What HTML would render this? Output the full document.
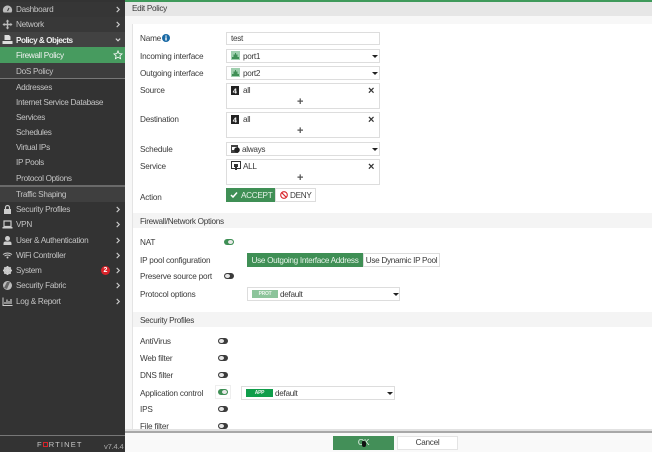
<!DOCTYPE html>
<html><head><meta charset="utf-8">
<style>
*{box-sizing:border-box}
html,body{margin:0;padding:0;width:652px;height:452px;overflow:hidden;background:#fff;font-family:"Liberation Sans",sans-serif;font-size:8.2px;letter-spacing:-.3px;color:#3a3a3a}
#all{position:absolute;left:0;top:0;width:652px;height:452px;filter:blur(.3px)}
.a{position:absolute;white-space:nowrap}
#side{position:absolute;left:0;top:0;width:125px;height:452px;background:#333;color:#c4c4c4}
.m{position:absolute;left:0;width:125px;height:15.4px;line-height:15.4px;white-space:nowrap}
.m span{position:absolute;left:16px}
.m svg.i{position:absolute;left:2px;top:2px;width:11px;height:11px}
.m svg.c{position:absolute;left:115px;top:4px;width:6px;height:7px}
.lb{position:absolute;left:140px;white-space:nowrap;letter-spacing:-.2px}
.box{position:absolute;left:226px;width:154px;background:#fff;border:1px solid #ddd}
.car{position:absolute;width:0;height:0;border-left:3px solid transparent;border-right:3px solid transparent;border-top:3px solid #222}
.tg{position:absolute;width:10px;height:6px;border-radius:3px;background:#3c3c3c}
.tg:after{content:"";position:absolute;left:1px;top:1px;width:5px;height:4px;border-radius:50%;background:#e8e8e8}
.tg.on{background:#3f8f55}
.tg.on:after{left:4px}
.sec{position:absolute;left:133px;width:519px;height:15px;background:#f4f4f4;line-height:17px;padding-left:7px}
.x{position:absolute;left:141px;top:1px;font-size:11px;line-height:13px;font-weight:bold;color:#333;letter-spacing:0}
.p{position:absolute;left:70px;top:12px;font-size:11px;line-height:13px;color:#555;font-weight:bold;letter-spacing:0}
</style></head><body><div id="all">
<div id="side">
<div class="m" style="top:2px;background:#363636;"><svg class="i" viewBox="0 0 11 11"><path d="M5.500 1.500a4.600 4.600 0 0 0-4.400 6l.5 1h7.800l.5-1a4.600 4.600 0 0 0-4.400-6z" fill="#bbb"/><path d="M5.500 7l1.500-3" stroke="#333" stroke-width="1"/></svg><span>Dashboard</span><svg class="c" viewBox="0 0 7 8"><path d="M2 1l3 3-3 3" fill="none" stroke="#ccc" stroke-width="1.300"/></svg></div>
<div class="m" style="top:17px;background:#383838"><svg class="i" viewBox="0 0 11 11"><path d="M5.500.5L7.300 2.500H6.200V4.800H8.500V3.700L10.500 5.500 8.500 7.300V6.200H6.200V8.500H7.300L5.500 10.500 3.700 8.500H4.800V6.200H2.500V7.300L.5 5.500 2.500 3.700V4.800H4.800V2.500H3.700z" fill="#bbb"/></svg><span>Network</span><svg class="c" viewBox="0 0 7 8"><path d="M2 1l3 3-3 3" fill="none" stroke="#ccc" stroke-width="1.300"/></svg></div>
<div class="m" style="top:32px;background:#424242;color:#eee;font-weight:bold;letter-spacing:-.5px"><svg class="i" viewBox="0 0 11 11"><path d="M2.500 1h4.500l1.500 1.500V6h-6zM.5 7h10v3h-10z" fill="#ddd"/></svg><span style="top:1px">Policy &amp; Objects</span><svg class="c" viewBox="0 0 7 8"><path d="M1 3l2.500 2.500L6 3" fill="none" stroke="#ddd" stroke-width="1.300"/></svg></div>
<div class="m" style="top:47px;height:16px;line-height:16px;background:#479b5f;color:#f2f2f2"><span style="top:1px">Firewall Policy</span><svg style="position:absolute;left:113px;top:3px;width:10px;height:10px" viewBox="0 0 11 11"><path d="M5.500 1l1.300 3 3.200.3-2.400 2.100.7 3.100-2.800-1.600-2.800 1.600.7-3.100L1 4.300l3.200-.3z" fill="none" stroke="#fff" stroke-width=".9"/></svg></div>
<div class="m" style="top:63px;height:16px;line-height:16px;background:#3d3d3d;border-bottom:1px solid #777"><span style="top:1px">DoS Policy</span></div>
<div class="m" style="top:80px"><span>Addresses</span></div>
<div class="m" style="top:94.500px"><span>Internet Service Database</span></div>
<div class="m" style="top:110px"><span>Services</span></div>
<div class="m" style="top:125px"><span>Schedules</span></div>
<div class="m" style="top:140px"><span>Virtual IPs</span></div>
<div class="m" style="top:155px"><span>IP Pools</span></div>
<div class="m" style="top:171px"><span>Protocol Options</span></div>
<div class="m" style="top:185px;height:17px;line-height:15px;background:#3f3f3f;border-top:2px solid #6a6a6a"><span>Traffic Shaping</span></div>
<div class="m" style="top:202px"><svg class="i" viewBox="0 0 11 11"><path d="M3.500 5V3.500a2 2 0 0 1 4 0V5" fill="none" stroke="#ccc" stroke-width="1.200"/><rect x="2" y="5" width="7" height="5" fill="#ccc"/></svg><span>Security Profiles</span><svg class="c" viewBox="0 0 7 8"><path d="M2 1l3 3-3 3" fill="none" stroke="#ccc" stroke-width="1.300"/></svg></div>
<div class="m" style="top:217px"><svg class="i" viewBox="0 0 11 11"><rect x="2" y="2" width="7" height="5.500" fill="none" stroke="#ccc" stroke-width="1.200"/><rect x=".5" y="8" width="10" height="1.500" fill="#ccc"/></svg><span>VPN</span><svg class="c" viewBox="0 0 7 8"><path d="M2 1l3 3-3 3" fill="none" stroke="#ccc" stroke-width="1.300"/></svg></div>
<div class="m" style="top:233px"><svg class="i" viewBox="0 0 11 11"><circle cx="5.500" cy="3.500" r="2.500" fill="#ccc"/><path d="M1.500 10V8.500q0-2 2-2h4q2 0 2 2V10z" fill="#ccc"/></svg><span>User &amp; Authentication</span><svg class="c" viewBox="0 0 7 8"><path d="M2 1l3 3-3 3" fill="none" stroke="#ccc" stroke-width="1.300"/></svg></div>
<div class="m" style="top:247.500px"><svg class="i" viewBox="0 0 11 11"><path d="M1 4.500q4.500-3 9 0M2.500 6q3-2 6 0" fill="none" stroke="#ccc" stroke-width="1"/><circle cx="5.500" cy="7.500" r="1" fill="#ccc"/></svg><span>WiFi Controller</span><svg class="c" viewBox="0 0 7 8"><path d="M2 1l3 3-3 3" fill="none" stroke="#ccc" stroke-width="1.300"/></svg></div>
<div class="m" style="top:263px"><svg class="i" viewBox="0 0 11 11"><circle cx="5.500" cy="5.500" r="3" fill="none" stroke="#ccc" stroke-width="2"/><path d="M5.500 1v9M1 5.500h9M2.300 2.300l6.400 6.400M8.700 2.300l-6.400 6.400" stroke="#ccc" stroke-width="1.300"/></svg><span>System</span><svg class="c" viewBox="0 0 7 8"><path d="M2 1l3 3-3 3" fill="none" stroke="#ccc" stroke-width="1.300"/></svg></div>
<div class="a" style="left:101px;top:266px;width:9px;height:9px;border-radius:50%;background:#d8232a;color:#fff;font-size:7px;font-weight:bold;line-height:9px;text-align:center;letter-spacing:0">2</div>
<div class="m" style="top:278px"><svg class="i" viewBox="0 0 11 11"><circle cx="5.500" cy="5.500" r="4.500" fill="#bbb"/><path d="M2 8l3-6 3 0-3 7z" fill="#666"/></svg><span>Security Fabric</span><svg class="c" viewBox="0 0 7 8"><path d="M2 1l3 3-3 3" fill="none" stroke="#ccc" stroke-width="1.300"/></svg></div>
<div class="m" style="top:294px"><svg class="i" viewBox="0 0 11 11"><path d="M1 1.500v8h9.500" fill="none" stroke="#ccc" stroke-width="1"/><path d="M3 8V6M5 8V3.500M7 8V5M9 8V3" stroke="#ccc" stroke-width="1.200"/></svg><span>Log &amp; Report</span><svg class="c" viewBox="0 0 7 8"><path d="M2 1l3 3-3 3" fill="none" stroke="#ccc" stroke-width="1.300"/></svg></div>
<div class="a" style="left:0;top:435px;width:125px;height:1px;background:#777"></div>
<div class="a" style="left:37px;top:440px;font-size:7.500px;letter-spacing:1.150px;color:#c4c4c4;line-height:9px">F<span style="display:inline-block;width:5px;height:5px;border:1.500px solid #d8232a;margin:0 1px 0 0;vertical-align:0"></span>RTINET</div>
<div class="a" style="left:104px;top:442px;font-size:7.600px;letter-spacing:-.2px;color:#aaa;line-height:10px">v7.4.4</div>
</div>
<div class="a" style="left:125px;top:0;width:527px;height:2px;background:#3f9a5b"></div>
<div class="a" style="left:125px;top:2px;width:527px;height:14px;background:#e6e6e6;line-height:14px;padding-left:7px">Edit Policy</div>
<div class="a" style="left:125px;top:16px;width:527px;height:8px;background:#f7f7f7"></div>
<div class="a" style="left:125px;top:24px;width:8px;height:408px;background:#f7f7f7"></div>
<div class="a" style="left:132px;top:24px;width:1px;height:408px;background:#e4e4e4"></div>

<div class="lb" style="top:34px">Name</div>
<svg class="a" style="left:162px;top:34px;width:8px;height:8px" viewBox="0 0 8 8"><circle cx="4" cy="4" r="4" fill="#1a6aa5"/><rect x="3.300" y="3.300" width="1.400" height="3.200" fill="#fff"/><rect x="3.300" y="1.500" width="1.400" height="1.200" fill="#fff"/></svg>
<div class="box" style="top:32px;height:13px;line-height:11px;padding-left:4px">test</div>
<div class="lb" style="top:52px">Incoming interface</div>
<div class="box" style="top:49px;height:14px;line-height:14px;padding-left:16px">port1<i class="car" style="left:145px;top:5px"></i><svg class="a" style="left:4px;top:1px;width:9px;height:9px" viewBox="0 0 9 9"><rect width="9" height="9" fill="#9fcfae"/><path d="M1 6h7v2H1zM2.500 3.500h4V6h-4zM4 2h1v2H4z" fill="#3f8f55"/></svg></div>
<div class="lb" style="top:69px">Outgoing interface</div>
<div class="box" style="top:66px;height:14px;line-height:14px;padding-left:16px">port2<i class="car" style="left:145px;top:5px"></i><svg class="a" style="left:4px;top:1px;width:9px;height:9px" viewBox="0 0 9 9"><rect width="9" height="9" fill="#9fcfae"/><path d="M1 6h7v2H1zM2.500 3.500h4V6h-4zM4 2h1v2H4z" fill="#3f8f55"/></svg></div>
<div class="lb" style="top:86px">Source</div>
<div class="box" style="top:83px;height:26px"><svg class="a" style="left:4px;top:2px;width:9px;height:9px" viewBox="0 0 9 9"><rect width="8" height="9" fill="#222"/><text x="1.800" y="7.500" font-size="7.500" font-weight="bold" fill="#fff" font-family="Liberation Sans">4</text></svg><div class="a" style="left:16px;top:1px;line-height:11px">all</div><div class="x">×</div><div class="p">+</div></div>
<div class="lb" style="top:115px">Destination</div>
<div class="box" style="top:112px;height:26px"><svg class="a" style="left:4px;top:2px;width:9px;height:9px" viewBox="0 0 9 9"><rect width="8" height="9" fill="#222"/><text x="1.800" y="7.500" font-size="7.500" font-weight="bold" fill="#fff" font-family="Liberation Sans">4</text></svg><div class="a" style="left:16px;top:1px;line-height:11px">all</div><div class="x">×</div><div class="p">+</div></div>
<div class="lb" style="top:145px">Schedule</div>
<div class="box" style="top:142px;height:14px;line-height:14px;padding-left:15px">always<i class="car" style="left:145px;top:5px"></i><svg class="a" style="left:4px;top:1px;width:9px;height:9px" viewBox="0 0 9 9"><rect x="0" y="1" width="7" height="8" fill="#444"/><rect x="1" y="3" width="5" height="3" fill="#fff"/><circle cx="6" cy="6" r="2.800" fill="#222"/></svg></div>
<div class="lb" style="top:162px">Service</div>
<div class="box" style="top:159px;height:26px"><svg class="a" style="left:4px;top:1px;width:10px;height:10px" viewBox="0 0 10 10"><rect x=".5" y=".5" width="9" height="7" fill="none" stroke="#333"/><path d="M3 3h4v3H6v3H4V6H3z" fill="#333"/></svg><div class="a" style="left:16px;top:1px;line-height:11px">ALL</div><div class="x">×</div><div class="p">+</div></div>
<div class="lb" style="top:193px">Action</div>
<div class="a" style="left:226px;top:188px;width:49px;height:14px;background:#3f8f55;color:#e8f3ea;line-height:16px;padding-left:15px"><svg class="a" style="left:4px;top:3px;width:8px;height:8px" viewBox="0 0 8 8"><path d="M1 4l2 2 4-4.500" fill="none" stroke="#fff" stroke-width="1.500"/></svg>ACCEPT</div>
<div class="a" style="left:275px;top:188px;width:41px;height:14px;background:#fff;border:1px solid #ddd;line-height:14px;padding-left:14px"><svg class="a" style="left:4px;top:2px;width:8px;height:8px" viewBox="0 0 8 8"><circle cx="4" cy="4" r="3.300" fill="none" stroke="#d8232a" stroke-width="1.100"/><path d="M1.700 1.700l4.600 4.600" stroke="#d8232a" stroke-width="1.100"/></svg>DENY</div>

<div class="sec" style="top:213px">Firewall/Network Options</div>
<div class="lb" style="top:238px">NAT</div>
<div class="tg on" style="left:224px;top:239px"></div>
<div class="lb" style="top:256px">IP pool configuration</div>
<div class="a" style="left:247px;top:253px;width:116px;height:14px;background:#3f8f55;color:#e8f3ea;line-height:16px;text-align:center">Use Outgoing Interface Address</div>
<div class="a" style="left:363px;top:253px;width:77px;height:14px;border:1px solid #ddd;line-height:14px;text-align:center">Use Dynamic IP Pool</div>
<div class="lb" style="top:272px">Preserve source port</div>
<div class="tg" style="left:224px;top:273px"></div>
<div class="lb" style="top:290px">Protocol options</div>
<div class="a" style="left:247px;top:287px;width:153px;height:14px;border:1px solid #ddd;line-height:14px;padding-left:32px">default<i class="car" style="left:145px;top:5px"></i><div class="a" style="left:4px;top:2px;width:26px;height:8px;background:#8cc49b;color:#e8f3ea;font-size:5px;line-height:8px;text-align:center;font-weight:bold">PROT</div></div>
<div class="sec" style="top:312px">Security Profiles</div>
<div class="lb" style="top:337px">AntiVirus</div>
<div class="tg" style="left:218px;top:338px"></div>
<div class="lb" style="top:354px">Web filter</div>
<div class="tg" style="left:218px;top:355px"></div>
<div class="lb" style="top:371px">DNS filter</div>
<div class="tg" style="left:218px;top:372px"></div>
<div class="lb" style="top:389px">Application control</div>
<div class="a" style="left:215px;top:385px;width:16px;height:14px;border:1px solid #eee"></div>
<div class="tg on" style="left:218px;top:389px"></div>
<div class="a" style="left:241px;top:386px;width:154px;height:14px;border:1px solid #ddd;line-height:14px;padding-left:33px">default<i class="car" style="left:145px;top:5px"></i><div class="a" style="left:4px;top:2px;width:27px;height:8px;background:#0f9d4a;color:#e8f3ea;font-size:5px;line-height:8px;text-align:center;font-weight:bold">APP</div></div>
<div class="lb" style="top:405px">IPS</div>
<div class="tg" style="left:218px;top:406px"></div>
<div class="lb" style="top:422px">File filter</div>
<div class="tg" style="left:218px;top:423px"></div>

<div class="a" style="left:125px;top:429px;width:527px;height:3px;background:#e2e2e2"></div>
<div class="a" style="left:125px;top:431px;width:527px;height:2px;background:#a8a8a8"></div>
<div class="a" style="left:125px;top:433px;width:527px;height:19px;background:#f9f9f9"></div>
<div class="a" style="left:333px;top:436px;width:61px;height:14px;background:#438f58;color:#e8f3ea;line-height:14px;text-align:center">OK</div>
<div class="a" style="left:397px;top:436px;width:61px;height:14px;background:#fff;border:1px solid #e4e4e4;line-height:12px;text-align:center">Cancel</div>
<div class="a" style="left:362px;top:441px;width:4px;height:6px;background:#111;border-radius:1px 2px 2px 2px"></div>
</div></body></html>
